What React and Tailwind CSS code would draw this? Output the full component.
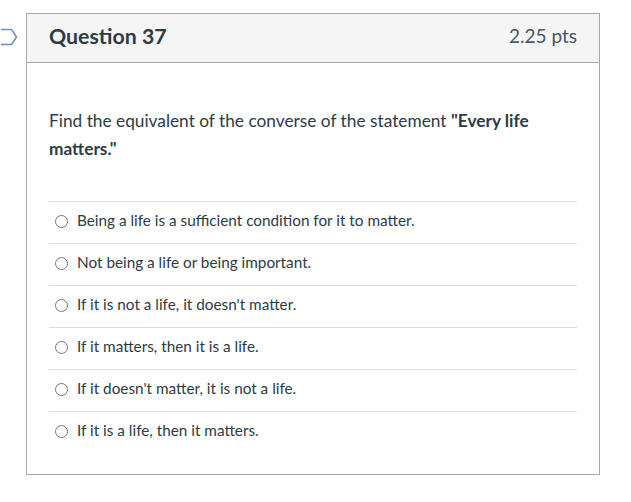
const answers = [
  "Being a life is a sufficient condition for it to matter.",
  "Not being a life or being important.",
  "If it is not a life, it doesn't matter.",
  "If it matters, then it is a life.",
  "If it doesn't matter, it is not a life.",
  "If it is a life, then it matters.",
];

const Flag = () => (
  <svg
    className="absolute left-[-26px] top-[14px]"
    width="18"
    height="18"
    viewBox="0 0 18 18"
    fill="none"
  >
    <path
      d="M-4 1.5H10.5L15.5 9L10.5 16.5H-4"
      stroke="#6f8fb4"
      strokeWidth="1.5"
      strokeLinejoin="round"
    />
  </svg>
);

const App = () => {
  return (
    <div
      className="min-h-screen bg-white pt-[13px] pl-[26px]"
      style={{ fontFamily: "Lato, 'Open Sans', sans-serif" }}
    >
      <div className="relative w-[574px] border border-[#a8a8a8] bg-white">
        <Flag />
        {/* Header */}
        <div className="flex h-[49px] items-center justify-between border-b border-[#a8a8a8] bg-[#f5f5f5] px-[22px] pb-[3px]">
          <h2 className="text-[21.3px] font-bold text-[#2d3b45]">Question 37</h2>
          <span className="text-[19px] text-[#4a5660]">2.25 pts</span>
        </div>

        {/* Body */}
        <div className="px-[22px] pt-[44px] pb-[21px]">
          <p className="text-[17.3px] leading-[28px] text-[#2d3b45]">
            Find the equivalent of the converse of the statement{" "}
            <strong className="font-bold">"Every life matters."</strong>
          </p>

          <div className="mt-[38px]">
            {answers.map((answer) => (
              <label
                key={answer}
                className="flex h-[42px] items-center gap-[9px] border-t border-[#dcdcdc] pb-[4px] pl-[6px] text-[15.3px] text-[#2d3b45]"
              >
                <span className="mt-[1px] h-[13px] w-[13px] rounded-full border border-[#767676] bg-white" />
                <span>{answer}</span>
              </label>
            ))}
          </div>
        </div>
      </div>
    </div>
  );
};

export default App;
